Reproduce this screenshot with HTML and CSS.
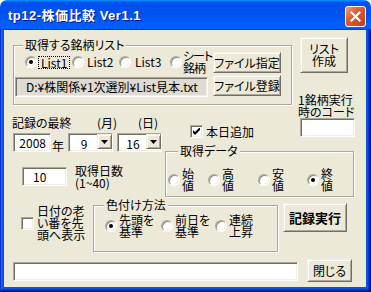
FILE: index.html
```html
<!DOCTYPE html>
<html lang="ja">
<head>
    <meta charset="UTF-8">
    <title>tp12-株価比較 Ver1.1</title>
    <link rel="stylesheet" href="styles.css">
</head>
<body>
<div class="window">
    <div class="titlebar">
        <span class="title">tp12-株価比較 Ver1.1</span>
        <span class="close-btn">
            <svg width="11" height="11" viewBox="0 0 11 11"><path d="M1.5 1.5 L9.5 9.5 M9.5 1.5 L1.5 9.5" stroke="#fff" stroke-width="2.2" stroke-linecap="square"/></svg>
        </span>
    </div>
    <div class="frame">
        <div class="client">
            <div class="upper">
                <div class="main">
                    <fieldset class="group list-group">
                        <legend>取得する銘柄リスト</legend>
                        <div class="list-inner">
                            <div class="list-left">
                                <div class="radio-row">
                                    <div class="opt opt-l1"><span class="radio on"></span><span class="focus">List1</span></div>
                                    <div class="opt opt-l2"><span class="radio"></span>List2</div>
                                    <div class="opt opt-l3"><span class="radio"></span>List3</div>
                                    <div class="opt opt-sheet"><span class="radio"></span><span class="lines sheet-label">シート<br>銘柄</span></div>
                                </div>
                                <div class="textbox path-box">D:¥株関係¥1次選別¥List見本.txt</div>
                            </div>
                            <div class="file-buttons">
                                <div class="btn file-btn">ファイル指定</div>
                                <div class="btn file-btn">ファイル登録</div>
                            </div>
                        </div>
                    </fieldset>

                    <div class="date-row">
                        <div class="date-col">
                            <div class="date-labels">
                                <span class="lbl-last">記録の最終</span>
                                <span class="lbl-month">(月)</span>
                                <span>(日)</span>
                            </div>
                            <div class="date-inputs">
                                <div class="textbox year-box">2008</div>
                                <span class="nen">年</span>
                                <div class="combo"><span class="combo-val">9</span><span class="drop"><svg width="7" height="4" viewBox="0 0 7 4"><path d="M0 0 H7 L3.5 4 Z" fill="#000"/></svg></span></div>
                                <div class="combo"><span class="combo-val">16</span><span class="drop"><svg width="7" height="4" viewBox="0 0 7 4"><path d="M0 0 H7 L3.5 4 Z" fill="#000"/></svg></span></div>
                            </div>
                            <div class="days-row">
                                <div class="textbox days-box">10</div>
                                <span class="days-label">取得日数<br>(1~40)</span>
                            </div>
                        </div>
                        <div class="data-col">
                            <div class="check-opt today-check">
                                <span class="checkbox"><svg width="7" height="7" viewBox="0 0 7 7"><path d="M0 2 L2 4 L7 -1 L7 2 L2 7 L0 5 Z" fill="#000"/></svg></span>
                                <span>本日追加</span>
                            </div>
                            <fieldset class="group data-group">
                                <legend>取得データ</legend>
                                <div class="opts">
                                    <div class="opt w40"><span class="radio"></span><span class="lines">始<br>値</span></div>
                                    <div class="opt w50"><span class="radio"></span><span class="lines">高<br>値</span></div>
                                    <div class="opt w49"><span class="radio"></span><span class="lines">安<br>値</span></div>
                                    <div class="opt"><span class="radio on"></span><span class="lines">終<br>値</span></div>
                                </div>
                            </fieldset>
                        </div>
                    </div>
                </div>

                <div class="side">
                    <div class="btn list-make">リスト<br>作成</div>
                    <div class="code-label">1銘柄実行<br>時のコード</div>
                    <div class="textbox code-box"></div>
                </div>
            </div>

            <div class="color-row">
                <div class="check-opt old-check">
                    <span class="checkbox"></span>
                    <span class="lines">日付の老<br>い番を先<br>頭へ表示</span>
                </div>
                <fieldset class="group color-group">
                    <legend>色付け方法</legend>
                    <div class="opts">
                        <div class="opt w56"><span class="radio on"></span><span class="lines">先頭を<br>基準</span></div>
                        <div class="opt w54"><span class="radio"></span><span class="lines">前日を<br>基準</span></div>
                        <div class="opt"><span class="radio"></span><span class="lines">連続<br>上昇</span></div>
                    </div>
                </fieldset>
                <div class="btn record-btn">記録実行</div>
            </div>

            <div class="bottom-row">
                <div class="textbox status-box"></div>
                <div class="btn close-app">閉じる</div>
            </div>
        </div>
    </div>
</div>
</body>
</html>
```

FILE: styles.css
```css
* {
    margin: 0;
    padding: 0;
    box-sizing: border-box;
}
body {
    background: #fff;
    font-family: "Noto Sans CJK JP", "Liberation Sans", sans-serif;
    font-size: 12px;
    line-height: 12px;
    color: #000;
    font-feature-settings: "palt";
}
.window {
    width: 371px;
    height: 292px;
    display: flex;
    flex-direction: column;
    border-radius: 7px 7px 0 0;
    overflow: hidden;
}
.titlebar {
    height: 30px;
    flex-shrink: 0;
    display: flex;
    justify-content: space-between;
    align-items: flex-start;
    padding: 0 5px 0 8px;
    background: linear-gradient(180deg, #0997ff, #0053ee 8%, #0050ee 40%, #0060fc 88%, #0062fe 93%, #005bff 95%, #003dd7 96%, #003dd7);
}
.title {
    color: #fff;
    font-family: "Liberation Sans", "Noto Sans CJK JP", sans-serif;
    font-weight: bold;
    font-size: 13px;
    line-height: 15px;
    margin-top: 8px;
    letter-spacing: .5px;
    text-shadow: 1px 1px #0a1883;
}
.close-btn {
    width: 21px;
    height: 21px;
    margin-top: 6px;
    border: 1px solid #fff;
    border-radius: 3px;
    background: linear-gradient(135deg, #f39a7d, #e25a33 40%, #d24a22 75%, #c0401c);
    display: flex;
    align-items: center;
    justify-content: center;
}
.frame {
    flex: 1;
    display: flex;
    padding: 0 5px 5px 4px;
    background: #0055ea;
    box-shadow: inset -1px -1px #00138c, inset 1px 0 #0831d9, inset -2px -2px #001ea0, inset 2px 0 #166aee, inset -3px -3px #003bda, inset 3px 0 #0855dd;
}
.client {
    flex: 1;
    background: #ece9d8;
}

/* common controls */
.btn {
    display: flex;
    align-items: center;
    justify-content: center;
    text-align: center;
    background: #ece9d8;
    border: 1px solid;
    border-color: #f1efe2 #716f64 #716f64 #f1efe2;
    box-shadow: inset 1px 1px #fff, inset -1px -1px #aca899;
}
.textbox {
    background: #fff;
    border: 1px solid;
    border-color: #aca899 #fff #fff #aca899;
    box-shadow: inset 1px 1px #716f64, inset -1px -1px #f1efe2;
    line-height: 15px;
}
.radio {
    width: 12px;
    height: 12px;
    flex-shrink: 0;
    border-radius: 50%;
    background: #fff;
    border: 1px solid;
    border-color: #aca899 #fff #fff #aca899;
    box-shadow: inset 1px 1px #8d8b80, inset -1px -1px #f1efe2;
    display: flex;
    align-items: center;
    justify-content: center;
}
.radio.on::after {
    content: "";
    width: 4px;
    height: 4px;
    border-radius: 50%;
    background: #000;
}
.checkbox {
    width: 13px;
    height: 13px;
    flex-shrink: 0;
    background: #fff;
    border: 1px solid;
    border-color: #aca899 #fff #fff #aca899;
    box-shadow: inset 1px 1px #716f64, inset -1px -1px #f1efe2;
    display: flex;
    align-items: center;
    justify-content: center;
}
.check-opt {
    display: flex;
    align-items: center;
    gap: 3px;
}
.group {
    border: 1px solid #aca899;
    box-shadow: inset 1px 1px #fff, 1px 1px #fff;
}
.group legend {
    line-height: 14px;
    padding: 0 2px;
    background: #ece9d8;
}
.opt {
    display: flex;
    align-items: center;
    gap: 2px;
    flex-shrink: 0;
}
.lines {
    line-height: 12px;
}

/* upper part */
.upper {
    display: flex;
    gap: 6px;
    padding: 7px 0 0 8px;
}
.main {
    width: 280px;
    display: flex;
    flex-direction: column;
}
.side {
    width: 58px;
    display: flex;
    flex-direction: column;
}
.list-group {
    width: 279px;
    margin: 1px 0 0 1px;
    padding: 0 10px 7px 1px;
}
.list-group legend {
    margin-left: 8px;
}
.list-inner {
    display: flex;
    gap: 5px;
    margin-top: -2px;
}
.list-left {
    width: 193px;
}
.radio-row {
    display: flex;
    align-items: center;
    height: 24px;
    padding-left: 10px;
}
.opt-l1 {
    width: 47px;
    gap: 1px;
}
.opt-l2 {
    width: 47px;
    gap: 3px;
}
.opt-l3 {
    width: 51px;
    gap: 4px;
}
.opt-sheet {
    gap: 1px;
}
.sheet-label {
    letter-spacing: -1px;
}
.focus {
    border: 1px dotted #000;
    padding: 0 2px;
    line-height: 11px;
}
.path-box {
    margin-top: 3px;
    height: 20px;
    padding: 1px 0 0 10px;
    background: #dddbd3;
    white-space: nowrap;
    overflow: hidden;
}
.file-buttons {
    display: flex;
    flex-direction: column;
    gap: 2px;
    margin-top: 2px;
    width: 68px;
}
.file-btn {
    height: 21px;
}

.date-row {
    display: flex;
}
.date-col {
    width: 150px;
    flex-shrink: 0;
}
.date-labels {
    display: flex;
    margin-top: 11px;
    line-height: 14px;
}
.lbl-last {
    width: 85px;
}
.lbl-month {
    width: 41px;
}
.date-inputs {
    display: flex;
    align-items: flex-end;
    margin-top: 3px;
}
.year-box {
    margin-left: 1px;
    width: 38px;
    height: 19px;
    text-align: right;
    padding: 1px 4px 0 0;
}
.nen {
    margin-left: 1px;
    width: 12px;
}
.combo {
    display: flex;
    margin-left: 4px;
    width: 45px;
    height: 19px;
    padding: 2px;
    background: #fff;
    border: 1px solid;
    border-color: #aca899 #fff #fff #aca899;
    box-shadow: inset 1px 1px #716f64, inset -1px -1px #f1efe2;
}
.combo-val {
    flex: 1;
    text-align: center;
    line-height: 15px;
}
.drop {
    width: 15px;
    height: 15px;
    margin: -2px -2px 0 0;
    display: flex;
    align-items: center;
    justify-content: center;
    background: #ece9d8;
    border: 1px solid;
    border-color: #f1efe2 #716f64 #716f64 #f1efe2;
    box-shadow: inset 1px 1px #fff, inset -1px -1px #aca899;
}
.days-row {
    display: flex;
    align-items: flex-start;
    margin-top: 15px;
}
.days-box {
    margin-left: 10px;
    width: 45px;
    height: 19px;
    padding: 1px 0 0 10px;
}
.days-label {
    margin: -2px 0 0 8px;
}
.data-col {
    width: 189px;
    margin-left: 3px;
    flex-shrink: 0;
}
.today-check {
    margin: 20px 0 0 25px;
}
.data-group {
    margin-top: 6px;
    padding: 0 0 4px 2px;
}
.data-group legend {
    margin-left: 10px;
}
.opts {
    display: flex;
    align-items: center;
}
.data-group .opts {
    margin-top: 10px;
}
.w40 { width: 40px; }
.w49 { width: 49px; }
.w50 { width: 50px; }
.w54 { width: 54px; }
.w56 { width: 56px; }

.list-make {
    margin-left: 2px;
    width: 48px;
    height: 36px;
}
.code-label {
    margin-top: 21px;
}
.code-box {
    margin-left: 2px;
    width: 55px;
    height: 19px;
}

/* lower part */
.color-row {
    display: flex;
    align-items: flex-start;
    padding-left: 8px;
    margin-top: 1px;
}
.old-check {
    width: 72px;
    margin: 7px 0 0 9px;
}
.color-group {
    width: 185px;
    padding: 0 0 13px 10px;
}
.color-group .opts {
    margin: 2px 0 0 1px;
}
.record-btn {
    margin: 5px 0 0 5px;
    width: 64px;
    height: 29px;
    font-weight: bold;
    font-size: 13px;
}
.bottom-row {
    display: flex;
    align-items: flex-start;
    padding-left: 9px;
    margin-top: 7px;
}
.status-box {
    width: 285px;
    height: 19px;
    margin-top: 3px;
}
.close-app {
    margin-left: 9px;
    width: 45px;
    height: 23px;
}
```
